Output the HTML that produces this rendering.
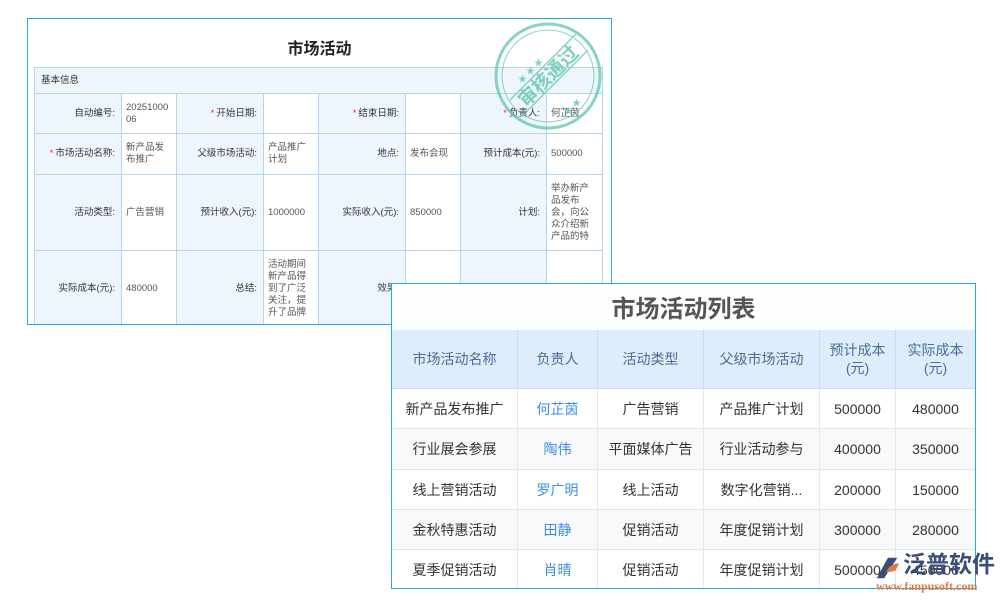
<!DOCTYPE html>
<html><head><meta charset="utf-8"><style>
*{margin:0;padding:0;box-sizing:border-box}
body{width:1000px;height:600px;background:#fff;position:relative;overflow:hidden;font-family:"Liberation Sans","Noto Sans CJK SC",sans-serif}
.p1{position:absolute;left:27px;top:18px;width:585px;height:307px;border:1px solid #27a8e0;background:#fff;overflow:hidden}
.p1 h1{position:absolute;left:0;width:100%;top:16px;text-align:center;font-size:16px;font-weight:bold;color:#222}
.c{position:absolute;border-right:1px solid #b7d4ee;border-bottom:1px solid #b7d4ee;font-size:9.5px;color:#555;display:flex;align-items:center;line-height:12px}
.l{background:#eef5fd;justify-content:flex-end;padding-right:6px;color:#333}
.v{background:#fff;padding-left:4px;padding-right:6px}
.r{color:#e33;margin-right:2px}
.p2{position:absolute;left:391px;top:283px;width:585px;height:306px;border:1px solid #27a8e0;background:#fdfefe;overflow:hidden}
.p2 h2{position:absolute;left:0;width:100%;top:5px;text-align:center;font-size:24px;font-weight:bold;color:#555}
.t{position:absolute;display:flex;align-items:center;justify-content:center;text-align:center;font-size:14px;color:#333;border-right:1px solid #e3e6ea;border-bottom:1px solid #e3e6ea;line-height:18px}
.h{background:#deedfb;color:#4a6d96;border-right:1px solid #c5dcf0;border-bottom:1px solid #c5dcf0}
.b{color:#3b8ee0}
</style></head><body>
<div class="p1"><h1>市场活动</h1>
<div style="position:absolute;left:6px;top:48px;width:569px;height:259px;border-left:1px solid #b7d4ee;border-top:1px solid #b7d4ee">
<div class="c l" style="left:0;top:0;width:568px;height:26px;justify-content:flex-start;padding-left:6px">基本信息</div>
<div id="g"></div>
</div>
</div>
<div class="p2"><h2>市场活动列表</h2><div id="g2"></div></div>
<svg style="position:absolute;left:490px;top:20px" width="120" height="120" viewBox="0 0 120 120">
<g fill="none" stroke="#5fc7a8" opacity="0.75"><circle cx="58" cy="56" r="52" stroke-width="3"/><circle cx="58" cy="56" r="46" stroke-width="1"/>
<line x1="20" y1="80" x2="86" y2="14" stroke-width="1.5"/><line x1="32" y1="96" x2="98" y2="30" stroke-width="1.5"/></g>
<g fill="#5fc7a8" opacity="0.8" font-size="9"><text x="28" y="62">★</text><text x="36" y="54">★</text><text x="44" y="46">★</text><text x="74" y="94">★</text><text x="82" y="86">★</text></g>
<text x="58" y="63" transform="rotate(-45 58 56)" text-anchor="middle" font-size="19" font-weight="bold" fill="#5fc7a8" opacity="0.8" font-family="Noto Sans CJK SC,sans-serif">审核通过</text>
</svg>
<div style="position:absolute;left:870px;top:550px;width:130px;height:46px;white-space:nowrap">
<svg style="position:absolute;left:2px;top:4px" width="30" height="28" viewBox="0 0 30 30"><path d="M4 26 L16 4 L26 4 L12 26Z" fill="#3b4e78"/><path d="M14 20 Q18 10 28 10 L24 18Z" fill="#e07a44"/></svg>
<div style="position:absolute;left:33px;top:0px;font-size:23px;line-height:28px;font-weight:bold;color:#3b4e78;letter-spacing:0px">泛普软件</div>
<div style="position:absolute;left:6px;top:29px;font-family:'Liberation Serif',serif;font-size:12px;color:#e07a44;font-weight:bold">www.fanpusoft.com</div>
</div>
<script>
var X=[0,87,142,229,284,371,426,512,568],Y=[26,66,107,183,259];
var D=[[["自动编号:",0],"2025100006",["开始日期:",1],"",["结束日期:",1],"",["负责人:",1],"何芷茵"],
[["市场活动名称:",1],"新产品发布推广",["父级市场活动:",0],"产品推广计划",["地点:",0],"发布会现",["预计成本(元):",0],"500000"],
[["活动类型:",0],"广告营销",["预计收入(元):",0],"1000000",["实际收入(元):",0],"850000",["计划:",0],"举办新产品发布会，向公众介绍新产品的特"],
[["实际成本(元):",0],"480000",["总结:",0],"活动期间新产品得到了广泛关注，提升了品牌",["效果:",0],"",["",0],""]];
var h="";
for(var r=0;r<4;r++)for(var c=0;c<8;c++){var d=D[r][c],s="left:"+X[c]+"px;top:"+Y[r]+"px;width:"+(X[c+1]-X[c])+"px;height:"+(Y[r+1]-Y[r])+"px";
if(c%2==0)h+='<div class="c l" style="'+s+'">'+(d[1]?'<span class="r">*</span>':'')+d[0]+'</div>';
else h+='<div class="c v" style="'+s+'"><span style="word-break:break-all">'+d+'</span></div>';}
document.getElementById("g").innerHTML=h;
var CX=[0,126,206,312,428,504,584],CY=[46,105,145,186,226,266,306];
var H=["市场活动名称","负责人","活动类型","父级市场活动","预计成本<br>(元)","实际成本<br>(元)"];
var R=[["新产品发布推广","何芷茵","广告营销","产品推广计划","500000","480000"],["行业展会参展","陶伟","平面媒体广告","行业活动参与","400000","350000"],["线上营销活动","罗广明","线上活动","数字化营销...","200000","150000"],["金秋特惠活动","田静","促销活动","年度促销计划","300000","280000"],["夏季促销活动","肖晴","促销活动","年度促销计划","500000","450000"]];
h="";
for(var c=0;c<6;c++)h+='<div class="t h" style="left:'+CX[c]+'px;top:'+CY[0]+'px;width:'+(CX[c+1]-CX[c])+'px;height:'+(CY[1]-CY[0])+'px">'+H[c]+'</div>';
for(var r=0;r<5;r++)for(var c=0;c<6;c++)h+='<div class="t'+(c==1?' b':'')+'" style="left:'+CX[c]+'px;top:'+CY[r+1]+'px;width:'+(CX[c+1]-CX[c])+'px;height:'+(CY[r+2]-CY[r+1])+'px;background:'+(r%2?'#f8f9fa':'#fff')+'">'+R[r][c]+'</div>';
document.getElementById("g2").innerHTML=h;
</script>
</body></html>
